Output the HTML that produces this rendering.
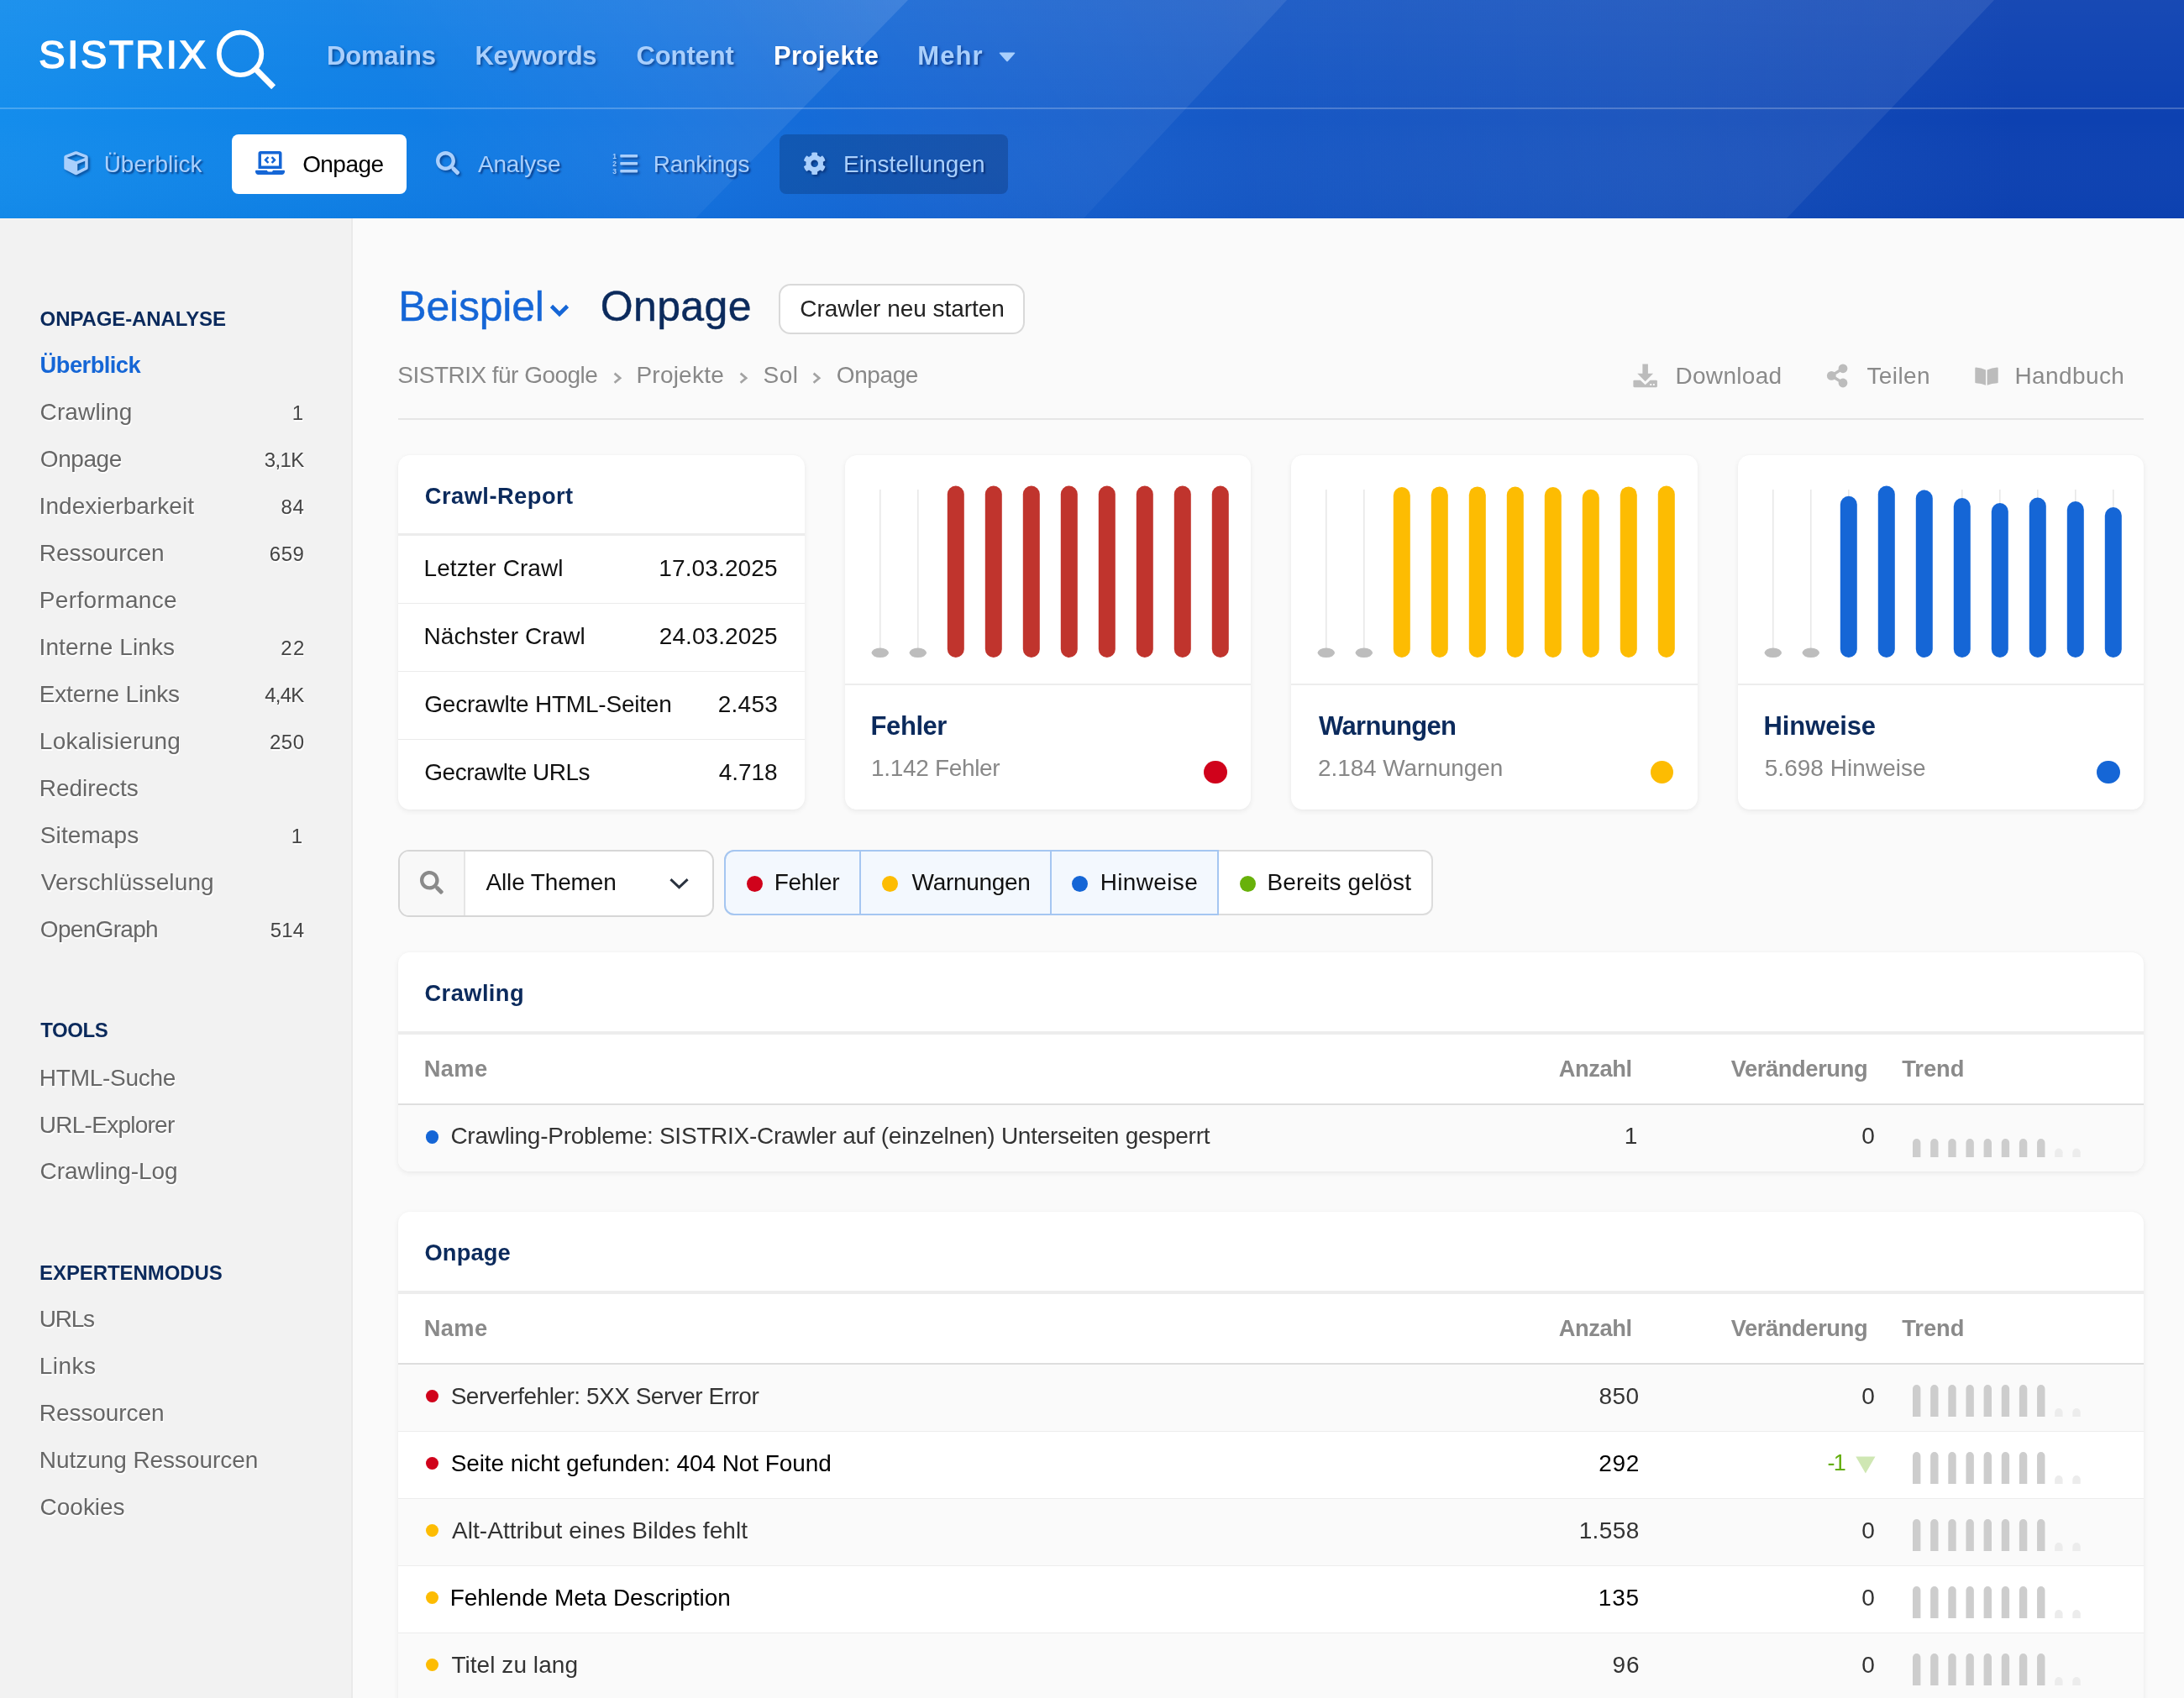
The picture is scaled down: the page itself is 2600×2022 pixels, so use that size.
<!DOCTYPE html>
<html lang="de"><head><meta charset="utf-8"><title>SISTRIX Onpage</title><style>
*{box-sizing:border-box;margin:0;padding:0}
html,body{width:2600px;height:2022px;overflow:hidden;background:#fafafa}
body{font-family:"Liberation Sans",sans-serif;position:relative;color:#333}
#root{position:absolute;left:0;top:0;width:2600px;height:2022px;overflow:hidden;will-change:transform;transform:translateZ(0)}
.t{position:absolute;white-space:nowrap}
.abs{position:absolute}
#hdr{position:absolute;left:0;top:0;width:2600px;height:260px;overflow:hidden;
 background:linear-gradient(90deg,#148dec 0%,#0f82e7 14%,#1274e0 29%,#1764d1 44%,#1657c4 58%,#144fbb 76%,#0d41b1 92%,#0d41b1 100%)}
#hdr .ov{position:absolute;left:0;top:0;width:2600px;height:260px}
#side{position:absolute;left:0;top:260px;width:420px;height:1762px;background:#f2f2f2;border-right:2px solid #e9e9e9}
.card{position:absolute;background:#fff;border-radius:14px;box-shadow:0 2px 6px rgba(0,0,0,.07),0 0 2px rgba(0,0,0,.04)}
.hl{position:absolute;height:2px;background:#ececec}
.sh{text-shadow:2px 2px 3px rgba(0,40,110,.55)}
</style></head><body><div id="root">
<div id="hdr">
<svg class="ov" viewBox="0 0 2600 260" preserveAspectRatio="none">
<defs>
<linearGradient id="gv" x1="0" y1="0" x2="0" y2="1"><stop offset="0" stop-color="#fff" stop-opacity=".045"/><stop offset=".55" stop-color="#fff" stop-opacity="0"/><stop offset="1" stop-color="#003a9a" stop-opacity=".05"/></linearGradient>
<linearGradient id="g1" gradientUnits="userSpaceOnUse" x1="640" y1="330" x2="1081" y2="0"><stop offset="0" stop-color="#fff" stop-opacity="0"/><stop offset="1" stop-color="#fff" stop-opacity=".12"/></linearGradient>
<linearGradient id="g2" gradientUnits="userSpaceOnUse" x1="1080" y1="330" x2="1532" y2="0"><stop offset="0" stop-color="#fff" stop-opacity="0"/><stop offset="1" stop-color="#fff" stop-opacity=".085"/></linearGradient>
<linearGradient id="g3" gradientUnits="userSpaceOnUse" x1="1450" y1="130" x2="2374" y2="0"><stop offset="0" stop-color="#fff" stop-opacity="0"/><stop offset="1" stop-color="#fff" stop-opacity=".085"/></linearGradient>
</defs>
<rect x="0" y="0" width="2600" height="260" fill="url(#gv)"/>
<polygon points="0,0 1081,0 828,260 0,260" fill="url(#g1)"/>
<polygon points="0,0 1532,0 1290,260 0,260" fill="url(#g2)"/>
<polygon points="0,0 2374,0 2127,260 0,260" fill="url(#g3)"/>
</svg>
<div class="abs" style="left:0;top:128px;width:2600px;height:2px;background:rgba(255,255,255,.22)"></div>
<div class="t" style="top:40.81px;font-size:47px;line-height:47px;color:#fff;letter-spacing:2.617px;left:46.35px;font-weight:400;-webkit-text-stroke:1.7px #fff;">SISTRIX</div>
<svg class="abs" style="left:250px;top:30px" width="90" height="84" viewBox="0 0 90 84"><circle cx="36.05" cy="33.9" r="25.3" fill="none" stroke="#fff" stroke-width="5.65"/><path d="M54.3 52.3 L75.6 73.8" stroke="#fff" stroke-width="7" stroke-linecap="butt" fill="none"/></svg>
<div class="t" style="top:51.26px;font-size:31px;line-height:31px;color:#a9cffc;font-weight:700;letter-spacing:-0.142px;left:388.90px;text-shadow:2px 2px 3px rgba(0,25,85,.5);">Domains</div>
<div class="t" style="top:51.26px;font-size:31px;line-height:31px;color:#a9cffc;font-weight:700;letter-spacing:-0.471px;left:565.60px;text-shadow:2px 2px 3px rgba(0,25,85,.5);">Keywords</div>
<div class="t" style="top:51.26px;font-size:31px;line-height:31px;color:#a9cffc;font-weight:700;letter-spacing:-0.100px;left:757.45px;text-shadow:2px 2px 3px rgba(0,25,85,.5);">Content</div>
<div class="t" style="top:51.26px;font-size:31px;line-height:31px;color:#fff;font-weight:700;letter-spacing:0.379px;left:921.00px;text-shadow:2px 2px 3px rgba(0,25,85,.5);">Projekte</div>
<div class="t" style="top:51.26px;font-size:31px;line-height:31px;color:#a9cffc;font-weight:700;letter-spacing:1.067px;left:1092.30px;text-shadow:2px 2px 3px rgba(0,25,85,.5);">Mehr</div>
<svg class="abs" style="left:1189px;top:62px" width="20" height="12" viewBox="0 0 20 12"><path d="M1.5 0.5h17q1.6 0 .5 1.3l-8 9q-1 1.1-2 0l-8-9q-1.1-1.3.5-1.3z" fill="#a9cffc"/></svg>
<div class="abs" style="left:276px;top:160px;width:208px;height:70.6px;background:#fff;border-radius:8px"></div>
<div class="abs" style="left:928px;top:160px;width:272px;height:70.6px;background:rgba(0,10,40,.21);border-radius:8px"></div>
<div class="t" style="top:181.70px;font-size:28px;line-height:28px;color:#a9cffc;letter-spacing:0.012px;left:123.65px;text-shadow:2px 2px 2px rgba(0,25,85,.62);">Überblick</div>
<div class="t" style="top:181.60px;font-size:28px;line-height:28px;color:#000;letter-spacing:-0.560px;left:360.15px;">Onpage</div>
<div class="t" style="top:181.70px;font-size:28px;line-height:28px;color:#a9cffc;letter-spacing:-0.192px;left:569.00px;text-shadow:2px 2px 2px rgba(0,25,85,.62);">Analyse</div>
<div class="t" style="top:181.70px;font-size:28px;line-height:28px;color:#a9cffc;letter-spacing:-0.314px;left:777.85px;text-shadow:2px 2px 2px rgba(0,25,85,.62);">Rankings</div>
<div class="t" style="top:181.70px;font-size:28px;line-height:28px;color:#a9cffc;letter-spacing:0.050px;left:1003.95px;text-shadow:2px 2px 2px rgba(0,25,85,.62);">Einstellungen</div>
<svg class="abs" style="left:75.8px;top:180.3px;filter:drop-shadow(2px 2px 1.5px rgba(0,25,85,.55));" width="29" height="28.5" viewBox="0 0 512 512"><path d="M239.1 6.3l-208 78c-18.7 7-31.1 25-31.1 45v225.1c0 18.2 10.3 34.800 26.500 42.900l208 104c13.500 6.800 29.400 6.800 42.900 0l208-104c16.300-8.100 26.500-24.800 26.500-42.900V129.300c0-20-12.400-37.900-31.100-44.900l-208-78C262 2.200 250 2.200 239.100 6.300zM256 68.400l192 72v1.100l-192 78-192-78v-1.100l192-72zm32 356V275.500l160-65v133.900l-160 80z" fill="#a9cffc"/></svg>
<svg class="abs" style="left:304.2px;top:180.3px;" width="35" height="28" viewBox="0 0 640 512"><path d="M255.03 261.65c6.250 6.250 16.380 6.250 22.630 0l11.310-11.310c6.250-6.250 6.250-16.380 0-22.630L253.250 192l35.710-35.720c6.250-6.250 6.250-16.380 0-22.630l-11.310-11.310c-6.250-6.250-16.380-6.250-22.630 0l-58.340 58.340c-6.250 6.250-6.250 16.380 0 22.630l58.350 58.340zm96.010-11.300l11.310 11.310c6.250 6.250 16.380 6.250 22.630 0l58.340-58.340c6.250-6.250 6.250-16.380 0-22.630l-58.340-58.340c-6.250-6.250-16.380-6.250-22.630 0l-11.310 11.310c-6.250 6.250-6.250 16.380 0 22.630L386.750 192l-35.710 35.720c-6.250 6.250-6.250 16.380 0 22.630zM624 416H381.540c-.74 19.810-14.710 32-32.740 32H288c-18.690 0-33.020-17.470-32.770-32H16c-8.800 0-16 7.200-16 16v16c0 35.200 28.800 64 64 64h512c35.200 0 64-28.800 64-64v-16c0-8.800-7.200-16-16-16zM576 48c0-26.400-21.600-48-48-48H112C85.600 0 64 21.600 64 48v336h512V48zm-64 272H128V64h384v256z" fill="#1566d6"/></svg>
<svg class="abs" style="left:519.2px;top:180.3px;filter:drop-shadow(2px 2px 1.5px rgba(0,25,85,.55));" width="28.3" height="28.3" viewBox="0 0 512 512"><path d="M505 442.7L405.3 343c-4.5-4.5-10.6-7-17-7H372c27.6-35.3 44-79.7 44-128C416 93.1 322.9 0 208 0S0 93.1 0 208s93.1 208 208 208c48.3 0 92.7-16.4 128-44v16.3c0 6.4 2.500 12.500 7 17l99.700 99.700c9.400 9.400 24.600 9.400 33.900 0l28.300-28.300c9.400-9.400 9.400-24.600.1-34zM208 336c-70.700 0-128-57.200-128-128 0-70.700 57.200-128 128-128 70.700 0 128 57.200 128 128 0 70.700-57.200 128-128 128z" fill="#a9cffc"/></svg>
<svg class="abs" style="left:729px;top:181px;filter:drop-shadow(2px 2px 1.5px rgba(0,25,85,.55));" width="32" height="28" viewBox="0 0 32 28"><rect x="9.3" y="3" width="20.8" height="3.6" rx=".8" fill="#a9cffc"/><rect x="9.3" y="12" width="20.8" height="3.6" rx=".8" fill="#a9cffc"/><rect x="9.3" y="21" width="20.800" height="3.600" rx=".8" fill="#a9cffc"/><g fill="#a9cffc" font-family="Liberation Sans,sans-serif" font-weight="700" font-size="8.5"><text x="0.3" y="7.6">1</text><text x="0.3" y="16.8">2</text><text x="0.3" y="26">3</text></g></svg>
<svg class="abs" style="left:956.4px;top:180.8px;filter:drop-shadow(2px 2px 1.5px rgba(0,25,85,.55));" width="27.4" height="27.4" viewBox="0 0 512 512"><path d="M487.4 315.7l-42.6-24.6c4.3-23.2 4.3-47 0-70.2l42.6-24.6c4.9-2.8 7.1-8.6 5.5-14-11.1-35.6-30-67.8-54.7-94.6-3.8-4.1-10-5.1-14.800-2.300L380.800 110c-17.900-15.400-38.500-27.300-60.800-35.100V25.800c0-5.600-3.900-10.500-9.400-11.700-36.700-8.200-74.300-7.800-109.200 0-5.500 1.200-9.400 6.100-9.400 11.700V75c-22.200 7.900-42.800 19.800-60.800 35.100L88.700 85.500c-4.900-2.800-11-1.900-14.800 2.300-24.700 26.700-43.600 58.900-54.700 94.600-1.700 5.400.6 11.200 5.500 14L67.300 221c-4.300 23.200-4.300 47 0 70.200l-42.600 24.600c-4.900 2.800-7.100 8.600-5.500 14 11.100 35.600 30 67.800 54.700 94.600 3.800 4.100 10 5.100 14.800 2.300l42.600-24.600c17.900 15.400 38.500 27.300 60.800 35.100v49.200c0 5.600 3.900 10.500 9.400 11.700 36.700 8.200 74.300 7.800 109.200 0 5.500-1.200 9.400-6.100 9.400-11.700v-49.200c22.200-7.900 42.800-19.800 60.800-35.100l42.600 24.600c4.900 2.800 11 1.900 14.800-2.300 24.700-26.700 43.600-58.900 54.700-94.600 1.500-5.500-.7-11.300-5.600-14.100zM256 336c-44.100 0-80-35.900-80-80s35.900-80 80-80 80 35.900 80 80-35.900 80-80 80z" fill="#a9cffc"/></svg>
</div>
<svg width="0" height="0" style="position:absolute"><defs><filter id="sb" x="-5%" y="-20%" width="110%" height="140%"><feGaussianBlur stdDeviation="0.55"/></filter></defs></svg>
<div id="side"></div>
<div class="t" style="top:367.68px;font-size:24px;line-height:24px;color:#0b2a5c;font-weight:700;letter-spacing:-0.104px;left:47.60px;">ONPAGE-ANALYSE</div>
<div class="t" style="top:421.39px;font-size:27.3px;line-height:27.3px;color:#1566d6;font-weight:700;letter-spacing:-0.537px;left:47.60px;">Überblick</div>
<div class="t" style="top:476.90px;font-size:28px;line-height:28px;color:#666;letter-spacing:0.114px;left:47.60px;text-shadow:1px 1.5px 0 rgba(255,255,255,.95);">Crawling</div>
<div class="t" style="top:480.28px;font-size:24px;line-height:24px;color:#444;right:2239.01px;text-shadow:1px 1.5px 0 rgba(255,255,255,.95);">1</div>
<div class="t" style="top:532.90px;font-size:28px;line-height:28px;color:#666;letter-spacing:-0.440px;left:47.85px;text-shadow:1px 1.5px 0 rgba(255,255,255,.95);">Onpage</div>
<div class="t" style="top:536.28px;font-size:24px;line-height:24px;color:#444;letter-spacing:-0.600px;right:2238.32px;text-shadow:1px 1.5px 0 rgba(255,255,255,.95);">3,1K</div>
<div class="t" style="top:588.90px;font-size:28px;line-height:28px;color:#666;letter-spacing:0.057px;left:46.60px;text-shadow:1px 1.5px 0 rgba(255,255,255,.95);">Indexierbarkeit</div>
<div class="t" style="top:592.28px;font-size:24px;line-height:24px;color:#444;letter-spacing:0.600px;right:2237.51px;text-shadow:1px 1.5px 0 rgba(255,255,255,.95);">84</div>
<div class="t" style="top:644.90px;font-size:28px;line-height:28px;color:#666;letter-spacing:-0.072px;left:46.85px;text-shadow:1px 1.5px 0 rgba(255,255,255,.95);">Ressourcen</div>
<div class="t" style="top:648.28px;font-size:24px;line-height:24px;color:#444;letter-spacing:0.525px;right:2237.54px;text-shadow:1px 1.5px 0 rgba(255,255,255,.95);">659</div>
<div class="t" style="top:700.90px;font-size:28px;line-height:28px;color:#666;letter-spacing:0.355px;left:46.85px;text-shadow:1px 1.5px 0 rgba(255,255,255,.95);">Performance</div>
<div class="t" style="top:756.90px;font-size:28px;line-height:28px;color:#666;letter-spacing:0.088px;left:46.60px;text-shadow:1px 1.5px 0 rgba(255,255,255,.95);">Interne Links</div>
<div class="t" style="top:760.28px;font-size:24px;line-height:24px;color:#444;letter-spacing:1.350px;right:2236.26px;text-shadow:1px 1.5px 0 rgba(255,255,255,.95);">22</div>
<div class="t" style="top:812.90px;font-size:28px;line-height:28px;color:#666;letter-spacing:-0.200px;left:46.85px;text-shadow:1px 1.5px 0 rgba(255,255,255,.95);">Externe Links</div>
<div class="t" style="top:816.28px;font-size:24px;line-height:24px;color:#444;letter-spacing:-0.767px;right:2238.49px;text-shadow:1px 1.5px 0 rgba(255,255,255,.95);">4,4K</div>
<div class="t" style="top:868.90px;font-size:28px;line-height:28px;color:#666;letter-spacing:0.258px;left:46.85px;text-shadow:1px 1.5px 0 rgba(255,255,255,.95);">Lokalisierung</div>
<div class="t" style="top:872.28px;font-size:24px;line-height:24px;color:#444;letter-spacing:0.450px;right:2237.57px;text-shadow:1px 1.5px 0 rgba(255,255,255,.95);">250</div>
<div class="t" style="top:924.90px;font-size:28px;line-height:28px;color:#666;letter-spacing:-0.050px;left:46.85px;text-shadow:1px 1.5px 0 rgba(255,255,255,.95);">Redirects</div>
<div class="t" style="top:980.90px;font-size:28px;line-height:28px;color:#666;letter-spacing:0.086px;left:47.85px;text-shadow:1px 1.5px 0 rgba(255,255,255,.95);">Sitemaps</div>
<div class="t" style="top:984.28px;font-size:24px;line-height:24px;color:#444;right:2239.81px;text-shadow:1px 1.5px 0 rgba(255,255,255,.95);">1</div>
<div class="t" style="top:1036.90px;font-size:28px;line-height:28px;color:#666;letter-spacing:0.139px;left:48.85px;text-shadow:1px 1.5px 0 rgba(255,255,255,.95);">Verschlüsselung</div>
<div class="t" style="top:1092.90px;font-size:28px;line-height:28px;color:#666;letter-spacing:-0.694px;left:47.85px;text-shadow:1px 1.5px 0 rgba(255,255,255,.95);">OpenGraph</div>
<div class="t" style="top:1096.28px;font-size:24px;line-height:24px;color:#444;letter-spacing:0.150px;right:2237.72px;text-shadow:1px 1.5px 0 rgba(255,255,255,.95);">514</div>
<div class="t" style="top:1215.48px;font-size:24px;line-height:24px;color:#0b2a5c;font-weight:700;letter-spacing:-0.475px;left:48.35px;">TOOLS</div>
<div class="t" style="top:1269.50px;font-size:28px;line-height:28px;color:#666;letter-spacing:-0.267px;left:46.85px;text-shadow:1px 1.5px 0 rgba(255,255,255,.95);">HTML-Suche</div>
<div class="t" style="top:1325.50px;font-size:28px;line-height:28px;color:#666;letter-spacing:-0.745px;left:46.85px;text-shadow:1px 1.5px 0 rgba(255,255,255,.95);">URL-Explorer</div>
<div class="t" style="top:1381.40px;font-size:28px;line-height:28px;color:#666;letter-spacing:-0.086px;left:47.60px;text-shadow:1px 1.5px 0 rgba(255,255,255,.95);">Crawling-Log</div>
<div class="t" style="top:1503.78px;font-size:24px;line-height:24px;color:#0b2a5c;font-weight:700;letter-spacing:-0.088px;left:47.10px;">EXPERTENMODUS</div>
<div class="t" style="top:1557.20px;font-size:28px;line-height:28px;color:#666;letter-spacing:-1.250px;left:46.85px;text-shadow:1px 1.5px 0 rgba(255,255,255,.95);">URLs</div>
<div class="t" style="top:1613.20px;font-size:28px;line-height:28px;color:#666;letter-spacing:0.450px;left:46.85px;text-shadow:1px 1.5px 0 rgba(255,255,255,.95);">Links</div>
<div class="t" style="top:1669.20px;font-size:28px;line-height:28px;color:#666;letter-spacing:-0.072px;left:46.85px;text-shadow:1px 1.5px 0 rgba(255,255,255,.95);">Ressourcen</div>
<div class="t" style="top:1725.20px;font-size:28px;line-height:28px;color:#666;letter-spacing:-0.065px;left:46.85px;text-shadow:1px 1.5px 0 rgba(255,255,255,.95);">Nutzung Ressourcen</div>
<div class="t" style="top:1781.10px;font-size:28px;line-height:28px;color:#666;letter-spacing:-0.025px;left:47.60px;text-shadow:1px 1.5px 0 rgba(255,255,255,.95);">Cookies</div>
<div class="t" style="top:339.68px;font-size:50px;line-height:50px;color:#1566d6;letter-spacing:-0.207px;left:474.30px;-webkit-text-stroke:.45px #1566d6;">Beispiel</div>
<svg class="abs" style="left:652px;top:360px" width="28" height="20" viewBox="0 0 28 20"><path d="M4.5 4.5 L14 14 L23.5 4.5" fill="none" stroke="#1566d6" stroke-width="4.6" stroke-linecap="butt" stroke-linejoin="miter"/></svg>
<div class="t" style="top:339.68px;font-size:50px;line-height:50px;color:#0b2a5c;letter-spacing:0.400px;left:714.65px;-webkit-text-stroke:.45px #0b2a5c;">Onpage</div>
<div class="abs" style="left:927.2px;top:338px;width:293.3px;height:59.7px;background:#fff;border:2px solid #d9d9d9;border-radius:14px"></div>
<div class="t" style="top:353.70px;font-size:28px;line-height:28px;color:#222;letter-spacing:-0.033px;left:952.20px;">Crawler neu starten</div>
<div class="t" style="top:433.00px;font-size:28px;line-height:28px;color:#888;letter-spacing:-0.529px;left:473.35px;">SISTRIX für Google</div>
<div class="t" style="top:433.00px;font-size:28px;line-height:28px;color:#888;letter-spacing:0.221px;left:757.45px;">Projekte</div>
<div class="t" style="top:433.00px;font-size:28px;line-height:28px;color:#888;letter-spacing:0.525px;left:908.45px;">Sol</div>
<div class="t" style="top:433.00px;font-size:28px;line-height:28px;color:#888;letter-spacing:-0.400px;left:995.75px;">Onpage</div>
<svg class="abs" style="left:728.9px;top:440px" width="14" height="20" viewBox="0 0 14 20"><path d="M2.6 4.6 L9.2 10.2 L2.6 15.8" fill="none" stroke="#a3a3a3" stroke-width="2.7"/></svg>
<svg class="abs" style="left:879.4px;top:440px" width="14" height="20" viewBox="0 0 14 20"><path d="M2.6 4.6 L9.2 10.2 L2.6 15.8" fill="none" stroke="#a3a3a3" stroke-width="2.7"/></svg>
<svg class="abs" style="left:966.4px;top:440px" width="14" height="20" viewBox="0 0 14 20"><path d="M2.6 4.6 L9.2 10.2 L2.6 15.8" fill="none" stroke="#a3a3a3" stroke-width="2.7"/></svg>
<div class="t" style="top:434.00px;font-size:28px;line-height:28px;color:#8a8a8a;letter-spacing:0.314px;left:1994.45px;">Download</div>
<div class="t" style="top:434.00px;font-size:28px;line-height:28px;color:#8a8a8a;letter-spacing:0.370px;left:2222.50px;">Teilen</div>
<div class="t" style="top:434.00px;font-size:28px;line-height:28px;color:#8a8a8a;letter-spacing:0.400px;left:2398.45px;">Handbuch</div>
<svg class="abs" style="left:1944px;top:433px" width="30" height="29" viewBox="0 0 30 29"><path d="M11.4 .5h6.500v11.200h6.200L14.650 21.300 5.200 11.700h6.200z" fill="#bcbcbc"/><path d="M1.500 19.700h7.300l5.850 5.600 5.850-5.600h7.300q1.100 0 1.100 1.100v6.300q0 1.100-1.100 1.100H1.500q-1.100 0-1.100-1.100v-6.300q0-1.100 1.100-1.100zM20.300 24.100v1.900h1.900v-1.900zM23.900 24.100v1.900h1.900v-1.900z" fill="#bcbcbc" fill-rule="evenodd"/></svg>
<svg class="abs" style="left:2174px;top:433px" width="27" height="29" viewBox="0 0 27 29"><path d="M20 5.800 L6.300 14.400 L20 23" fill="none" stroke="#bcbcbc" stroke-width="3.4"/><circle cx="20" cy="5.800" r="5.400" fill="#bcbcbc"/><circle cx="6.300" cy="14.400" r="5.400" fill="#bcbcbc"/><circle cx="20" cy="23" r="5.400" fill="#bcbcbc"/></svg>
<svg class="abs" style="left:2351px;top:437px" width="28" height="22" viewBox="0 0 28 22"><path d="M.3 1.500Q.3 .5 1.300 .6 8 1 13 3.400V21.700Q8 19.400 1.300 19.200 .3 19.200 .3 18.200zM27.700 1.500Q27.700 .5 26.700 .6 20 1 14.600 3.400V21.700Q20 19.400 26.700 19.200 27.700 19.200 27.700 18.200z" fill="#bcbcbc"/></svg>
<div class="abs" style="left:474px;top:498px;width:2078px;height:2px;background:#e6e6e6"></div>
<div class="card" style="left:474px;top:542px;width:483.5px;height:422px"></div>
<div class="card" style="left:1005.5px;top:542px;width:483.5px;height:422px"></div>
<div class="card" style="left:1537px;top:542px;width:483.5px;height:422px"></div>
<div class="card" style="left:2068.5px;top:542px;width:483.5px;height:422px"></div>
<div class="t" style="top:576.89px;font-size:27.3px;line-height:27.3px;color:#0b2a5c;font-weight:700;letter-spacing:0.455px;left:505.80px;">Crawl-Report</div>
<div class="hl" style="left:474px;top:635.4px;width:483.5px;height:2.6px;background:#ececec"></div>
<div class="t" style="top:663.30px;font-size:28px;line-height:28px;color:#111;letter-spacing:0.088px;left:504.55px;">Letzter Crawl</div>
<div class="t" style="top:663.30px;font-size:28px;line-height:28px;color:#111;letter-spacing:0.133px;right:1674.28px;">17.03.2025</div>
<div class="t" style="top:744.00px;font-size:28px;line-height:28px;color:#111;letter-spacing:0.065px;left:504.55px;">Nächster Crawl</div>
<div class="t" style="top:744.00px;font-size:28px;line-height:28px;color:#111;letter-spacing:0.078px;right:1674.33px;">24.03.2025</div>
<div class="t" style="top:825.30px;font-size:28px;line-height:28px;color:#111;letter-spacing:-0.215px;left:505.30px;">Gecrawlte HTML-Seiten</div>
<div class="t" style="top:825.30px;font-size:28px;line-height:28px;color:#111;letter-spacing:0.212px;right:1674.04px;">2.453</div>
<div class="t" style="top:906.20px;font-size:28px;line-height:28px;color:#111;letter-spacing:-0.504px;left:505.30px;">Gecrawlte URLs</div>
<div class="t" style="top:906.20px;font-size:28px;line-height:28px;color:#111;letter-spacing:-0.100px;right:1674.61px;">4.718</div>
<div class="hl" style="left:474px;top:717.6px;width:483.5px;height:1.4px;background:#ebebeb"></div>
<div class="hl" style="left:474px;top:799px;width:483.5px;height:1.4px;background:#ebebeb"></div>
<div class="hl" style="left:474px;top:879.8px;width:483.5px;height:1.4px;background:#ebebeb"></div>
<svg class="abs" style="left:1005.5px;top:542px" width="484" height="274" viewBox="0 0 484 274"><rect x="41.2" y="41" width="1.3" height="194" fill="#e3e3e3"/><ellipse cx="41.8" cy="235.3" rx="10.2" ry="5.8" fill="#bdbdbd"/><rect x="86.2" y="41" width="1.3" height="194" fill="#e3e3e3"/><ellipse cx="86.8" cy="235.3" rx="10.2" ry="5.8" fill="#bdbdbd"/><rect x="121.8" y="36.5" width="20" height="204.5" rx="10" ry="10" fill="#c0342d"/><rect x="166.8" y="36.5" width="20" height="204.5" rx="10" ry="10" fill="#c0342d"/><rect x="211.8" y="36.5" width="20" height="204.5" rx="10" ry="10" fill="#c0342d"/><rect x="256.8" y="36.5" width="20" height="204.5" rx="10" ry="10" fill="#c0342d"/><rect x="301.8" y="36.5" width="20" height="204.5" rx="10" ry="10" fill="#c0342d"/><rect x="346.8" y="36.5" width="20" height="204.5" rx="10" ry="10" fill="#c0342d"/><rect x="391.8" y="36.5" width="20" height="204.5" rx="10" ry="10" fill="#c0342d"/><rect x="436.8" y="36.5" width="20" height="204.5" rx="10" ry="10" fill="#c0342d"/></svg>
<div class="hl" style="left:1005.5px;top:814px;width:483.5px;height:2px;background:#ededed"></div>
<div class="t" style="top:848.76px;font-size:31px;line-height:31px;color:#0b2a5c;font-weight:700;letter-spacing:-0.440px;left:1036.60px;">Fehler</div>
<div class="t" style="top:901.10px;font-size:28px;line-height:28px;color:#888;letter-spacing:-0.327px;left:1037.00px;">1.142 Fehler</div>
<div class="abs" style="left:1433.3px;top:905.7px;width:27.5px;height:27.5px;border-radius:50%;background:#d0021b"></div>
<svg class="abs" style="left:1537px;top:542px" width="484" height="274" viewBox="0 0 484 274"><rect x="41.2" y="41" width="1.3" height="194" fill="#e3e3e3"/><ellipse cx="41.8" cy="235.3" rx="10.2" ry="5.8" fill="#bdbdbd"/><rect x="86.2" y="41" width="1.3" height="194" fill="#e3e3e3"/><ellipse cx="86.8" cy="235.3" rx="10.2" ry="5.8" fill="#bdbdbd"/><rect x="121.8" y="38.0" width="20" height="203.0" rx="10" ry="10" fill="#fdbc02"/><rect x="166.8" y="37.4" width="20" height="203.6" rx="10" ry="10" fill="#fdbc02"/><rect x="211.8" y="37.4" width="20" height="203.6" rx="10" ry="10" fill="#fdbc02"/><rect x="256.8" y="37.6" width="20" height="203.4" rx="10" ry="10" fill="#fdbc02"/><rect x="301.8" y="38.0" width="20" height="203.0" rx="10" ry="10" fill="#fdbc02"/><rect x="346.8" y="40.8" width="20" height="200.2" rx="10" ry="10" fill="#fdbc02"/><rect x="391.8" y="37.4" width="20" height="203.6" rx="10" ry="10" fill="#fdbc02"/><rect x="436.8" y="36.5" width="20" height="204.5" rx="10" ry="10" fill="#fdbc02"/></svg>
<div class="hl" style="left:1537px;top:814px;width:483.5px;height:2px;background:#ededed"></div>
<div class="t" style="top:848.76px;font-size:31px;line-height:31px;color:#0b2a5c;font-weight:700;letter-spacing:-0.688px;left:1570.10px;">Warnungen</div>
<div class="t" style="top:901.10px;font-size:28px;line-height:28px;color:#888;letter-spacing:-0.096px;left:1569.00px;">2.184 Warnungen</div>
<div class="abs" style="left:1964.8px;top:905.7px;width:27.5px;height:27.5px;border-radius:50%;background:#fdbc02"></div>
<svg class="abs" style="left:2068.5px;top:542px" width="484" height="274" viewBox="0 0 484 274"><rect x="41.2" y="41" width="1.3" height="194" fill="#e3e3e3"/><ellipse cx="41.8" cy="235.3" rx="10.2" ry="5.8" fill="#bdbdbd"/><rect x="86.2" y="41" width="1.3" height="194" fill="#e3e3e3"/><ellipse cx="86.8" cy="235.3" rx="10.2" ry="5.8" fill="#bdbdbd"/><rect x="131.2" y="41" width="1.3" height="15.7" fill="#e3e3e3"/><rect x="121.8" y="48.7" width="20" height="192.3" rx="10" ry="10" fill="#1566d6"/><rect x="176.2" y="41" width="1.3" height="3.5" fill="#e3e3e3"/><rect x="166.8" y="36.5" width="20" height="204.5" rx="10" ry="10" fill="#1566d6"/><rect x="221.2" y="41" width="1.3" height="8.6" fill="#e3e3e3"/><rect x="211.8" y="41.6" width="20" height="199.4" rx="10" ry="10" fill="#1566d6"/><rect x="266.2" y="41" width="1.3" height="18.0" fill="#e3e3e3"/><rect x="256.8" y="51.0" width="20" height="190.0" rx="10" ry="10" fill="#1566d6"/><rect x="311.2" y="41" width="1.3" height="24.0" fill="#e3e3e3"/><rect x="301.8" y="57.0" width="20" height="184.0" rx="10" ry="10" fill="#1566d6"/><rect x="356.2" y="41" width="1.3" height="17.6" fill="#e3e3e3"/><rect x="346.8" y="50.6" width="20" height="190.4" rx="10" ry="10" fill="#1566d6"/><rect x="401.2" y="41" width="1.3" height="22.0" fill="#e3e3e3"/><rect x="391.8" y="55.0" width="20" height="186.0" rx="10" ry="10" fill="#1566d6"/><rect x="446.2" y="41" width="1.3" height="29.0" fill="#e3e3e3"/><rect x="436.8" y="62.0" width="20" height="179.0" rx="10" ry="10" fill="#1566d6"/></svg>
<div class="hl" style="left:2068.5px;top:814px;width:483.5px;height:2px;background:#ededed"></div>
<div class="t" style="top:848.76px;font-size:31px;line-height:31px;color:#0b2a5c;font-weight:700;letter-spacing:-0.129px;left:2099.60px;">Hinweise</div>
<div class="t" style="top:901.10px;font-size:28px;line-height:28px;color:#888;letter-spacing:0.031px;left:2100.75px;">5.698 Hinweise</div>
<div class="abs" style="left:2496.3px;top:905.7px;width:27.5px;height:27.5px;border-radius:50%;background:#1566d6"></div>
<div class="abs" style="left:474px;top:1012px;width:376px;height:79.6px;background:#fff;border:2px solid #d6d6d6;border-radius:13px;overflow:hidden"><div style="position:absolute;left:0;top:0;width:78px;height:100%;background:#f8f8f8;border-right:2px solid #e6e6e6"></div></div>
<svg class="abs" style="left:500.2px;top:1037.2px;" width="27.8" height="27.8" viewBox="0 0 512 512"><path d="M505 442.7L405.3 343c-4.5-4.5-10.6-7-17-7H372c27.6-35.3 44-79.7 44-128C416 93.1 322.9 0 208 0S0 93.1 0 208s93.1 208 208 208c48.3 0 92.7-16.4 128-44v16.3c0 6.4 2.500 12.500 7 17l99.700 99.700c9.400 9.400 24.600 9.400 33.900 0l28.300-28.300c9.400-9.400 9.400-24.600.1-34zM208 336c-70.700 0-128-57.200-128-128 0-70.700 57.200-128 128-128 70.700 0 128 57.200 128 128 0 70.700-57.200 128-128 128z" fill="#8a8a8a"/></svg>
<div class="t" style="top:1037.30px;font-size:28px;line-height:28px;color:#111;letter-spacing:-0.140px;left:578.50px;">Alle Themen</div>
<svg class="abs" style="left:795px;top:1043px" width="28" height="20" viewBox="0 0 28 20"><path d="M3.4 4.2 L13.5 13.6 L23.6 4.2" fill="none" stroke="#2b3340" stroke-width="3"/></svg>
<div class="abs" style="left:862.3px;top:1012px;width:843.4px;height:78px;background:#fff;border:2px solid #dcdcdc;border-radius:12px"></div>
<div class="abs" style="left:862.3px;top:1012px;width:589px;height:78px;background:#f3f8fe;border:2px solid #a5c6f1;border-radius:12px 0 0 12px"></div>
<div class="abs" style="left:1023px;top:1013px;width:2px;height:76px;background:#a5c6f1"></div>
<div class="abs" style="left:1250px;top:1013px;width:2px;height:76px;background:#a5c6f1"></div>
<div class="abs" style="left:888.6px;top:1043px;width:19px;height:19px;border-radius:50%;background:#d0021b"></div>
<div class="t" style="top:1036.60px;font-size:28px;line-height:28px;color:#111;letter-spacing:-0.310px;left:921.75px;">Fehler</div>
<div class="abs" style="left:1050.0px;top:1043px;width:19px;height:19px;border-radius:50%;background:#fdbc02"></div>
<div class="t" style="top:1036.60px;font-size:28px;line-height:28px;color:#111;letter-spacing:-0.294px;left:1085.55px;">Warnungen</div>
<div class="abs" style="left:1276.4px;top:1043px;width:19px;height:19px;border-radius:50%;background:#1566d6"></div>
<div class="t" style="top:1036.60px;font-size:28px;line-height:28px;color:#111;letter-spacing:0.357px;left:1309.65px;">Hinweise</div>
<div class="abs" style="left:1475.5px;top:1043px;width:19px;height:19px;border-radius:50%;background:#68b10a"></div>
<div class="t" style="top:1036.60px;font-size:28px;line-height:28px;color:#111;letter-spacing:0.142px;left:1508.45px;">Bereits gelöst</div>
<div class="card" style="left:474px;top:1133.8px;width:2078px;height:261px;overflow:hidden"><div style="position:absolute;left:0;top:94.2px;width:100%;height:4px;background:#ededed"></div><div style="position:absolute;left:0;top:179.8px;width:100%;height:2px;background:#dedede"></div></div>
<div class="t" style="top:1169.19px;font-size:27.3px;line-height:27.3px;color:#0b2a5c;font-weight:700;letter-spacing:0.407px;left:505.50px;">Crawling</div>
<div class="t" style="top:1259.19px;font-size:27.3px;line-height:27.3px;color:#8a8a8a;font-weight:700;letter-spacing:0.350px;left:504.75px;">Name</div>
<div class="t" style="top:1259.19px;font-size:27.3px;line-height:27.3px;color:#8a8a8a;font-weight:700;letter-spacing:-0.420px;right:657.39px;">Anzahl</div>
<div class="t" style="top:1259.19px;font-size:27.3px;line-height:27.3px;color:#8a8a8a;font-weight:700;letter-spacing:-0.405px;right:376.83px;">Veränderung</div>
<div class="t" style="top:1259.19px;font-size:27.3px;line-height:27.3px;color:#8a8a8a;font-weight:700;letter-spacing:-0.062px;left:2264.25px;">Trend</div>
<div class="abs" style="left:474px;top:1315.6px;width:2078px;height:79.2px;background:#fafafa;border-radius:0 0 14px 14px;"></div>
<div class="abs" style="left:506.5px;top:1346.4px;width:15.2px;height:15.2px;border-radius:50%;background:#1566d6"></div>
<div class="t" style="top:1339.10px;font-size:28px;line-height:28px;color:#333;letter-spacing:-0.267px;left:536.40px;">Crawling-Probleme: SISTRIX-Crawler auf (einzelnen) Unterseiten gesperrt</div>
<div class="t" style="top:1339.10px;font-size:28px;line-height:28px;color:#333;right:650.67px;">1</div>
<div class="t" style="top:1339.10px;font-size:28px;line-height:28px;color:#333;right:368.12px;">0</div>
<svg class="abs" style="left:2274.8px;top:1354.1999999999998px" width="208" height="23.5" viewBox="-2 -2 208 23.5"><g filter="url(#sb)"><rect x="0.00" y="0" width="9.4" height="29.5" rx="4.7" fill="#cdcdcd"/><rect x="21.15" y="0" width="9.4" height="29.5" rx="4.7" fill="#cdcdcd"/><rect x="42.30" y="0" width="9.4" height="29.5" rx="4.7" fill="#cdcdcd"/><rect x="63.45" y="0" width="9.4" height="29.5" rx="4.7" fill="#cdcdcd"/><rect x="84.60" y="0" width="9.4" height="29.5" rx="4.7" fill="#cdcdcd"/><rect x="105.75" y="0" width="9.4" height="29.5" rx="4.7" fill="#cdcdcd"/><rect x="126.90" y="0" width="9.4" height="29.5" rx="4.7" fill="#cdcdcd"/><rect x="148.05" y="0" width="9.4" height="29.5" rx="4.7" fill="#cdcdcd"/><rect x="169.20" y="11.5" width="9.4" height="20" rx="4.7" fill="#ececec"/><rect x="190.35" y="11.5" width="9.4" height="20" rx="4.7" fill="#ececec"/></g></svg>
<div class="card" style="left:474px;top:1443px;width:2078px;height:700px;overflow:hidden"><div style="position:absolute;left:0;top:94.2px;width:100%;height:4px;background:#ededed"></div><div style="position:absolute;left:0;top:179.8px;width:100%;height:2px;background:#dedede"></div></div>
<div class="t" style="top:1478.39px;font-size:27.3px;line-height:27.3px;color:#0b2a5c;font-weight:700;letter-spacing:0.110px;left:505.50px;">Onpage</div>
<div class="t" style="top:1568.39px;font-size:27.3px;line-height:27.3px;color:#8a8a8a;font-weight:700;letter-spacing:0.350px;left:504.75px;">Name</div>
<div class="t" style="top:1568.39px;font-size:27.3px;line-height:27.3px;color:#8a8a8a;font-weight:700;letter-spacing:-0.420px;right:657.39px;">Anzahl</div>
<div class="t" style="top:1568.39px;font-size:27.3px;line-height:27.3px;color:#8a8a8a;font-weight:700;letter-spacing:-0.405px;right:376.83px;">Veränderung</div>
<div class="t" style="top:1568.39px;font-size:27.3px;line-height:27.3px;color:#8a8a8a;font-weight:700;letter-spacing:-0.062px;left:2264.25px;">Trend</div>
<div class="abs" style="left:474px;top:1625px;width:2078px;height:80px;background:#fafafa;border-bottom:1px solid #ececec;"></div>
<div class="abs" style="left:506.5px;top:1654.6000000000001px;width:15.2px;height:15.2px;border-radius:50%;background:#d0021b"></div>
<div class="t" style="top:1648.50px;font-size:28px;line-height:28px;color:#333;letter-spacing:-0.488px;left:536.65px;">Serverfehler: 5XX Server Error</div>
<div class="t" style="top:1648.50px;font-size:28px;line-height:28px;color:#333;letter-spacing:0.500px;right:648.32px;">850</div>
<div class="t" style="top:1648.50px;font-size:28px;line-height:28px;color:#333;right:368.12px;">0</div>
<svg class="abs" style="left:2274.8px;top:1646.7px" width="208" height="40" viewBox="-2 -2 208 40"><g filter="url(#sb)"><rect x="0.00" y="0" width="9.4" height="46" rx="4.7" fill="#cdcdcd"/><rect x="21.15" y="0" width="9.4" height="46" rx="4.7" fill="#cdcdcd"/><rect x="42.30" y="0" width="9.4" height="46" rx="4.7" fill="#cdcdcd"/><rect x="63.45" y="0" width="9.4" height="46" rx="4.7" fill="#cdcdcd"/><rect x="84.60" y="0" width="9.4" height="46" rx="4.7" fill="#cdcdcd"/><rect x="105.75" y="0" width="9.4" height="46" rx="4.7" fill="#cdcdcd"/><rect x="126.90" y="0" width="9.4" height="46" rx="4.7" fill="#cdcdcd"/><rect x="148.05" y="0" width="9.4" height="46" rx="4.7" fill="#cdcdcd"/><rect x="169.20" y="28" width="9.4" height="20" rx="4.7" fill="#ececec"/><rect x="190.35" y="28" width="9.4" height="20" rx="4.7" fill="#ececec"/></g></svg>
<div class="abs" style="left:474px;top:1705px;width:2078px;height:80px;background:#fff;border-bottom:1px solid #ececec;"></div>
<div class="abs" style="left:506.5px;top:1734.6000000000001px;width:15.2px;height:15.2px;border-radius:50%;background:#d0021b"></div>
<div class="t" style="top:1728.50px;font-size:28px;line-height:28px;color:#000;letter-spacing:-0.088px;left:536.65px;">Seite nicht gefunden: 404 Not Found</div>
<div class="t" style="top:1728.50px;font-size:28px;line-height:28px;color:#000;letter-spacing:0.750px;right:647.82px;">292</div>
<div class="t" style="top:1729.34px;font-size:27px;line-height:27px;color:#62ad0a;letter-spacing:-1.700px;right:403.95px;">-1</div>
<svg class="abs" style="left:2208.5px;top:1734.2px" width="24" height="22" viewBox="0 0 24 22"><path d="M.3 .6h23.2L11.900 20.600z" fill="#cfe7b3"/></svg>
<svg class="abs" style="left:2274.8px;top:1726.7px" width="208" height="40" viewBox="-2 -2 208 40"><g filter="url(#sb)"><rect x="0.00" y="0" width="9.4" height="46" rx="4.7" fill="#cdcdcd"/><rect x="21.15" y="0" width="9.4" height="46" rx="4.7" fill="#cdcdcd"/><rect x="42.30" y="0" width="9.4" height="46" rx="4.7" fill="#cdcdcd"/><rect x="63.45" y="0" width="9.4" height="46" rx="4.7" fill="#cdcdcd"/><rect x="84.60" y="0" width="9.4" height="46" rx="4.7" fill="#cdcdcd"/><rect x="105.75" y="0" width="9.4" height="46" rx="4.7" fill="#cdcdcd"/><rect x="126.90" y="0" width="9.4" height="46" rx="4.7" fill="#cdcdcd"/><rect x="148.05" y="0" width="9.4" height="46" rx="4.7" fill="#cdcdcd"/><rect x="169.20" y="28" width="9.4" height="20" rx="4.7" fill="#ececec"/><rect x="190.35" y="28" width="9.4" height="20" rx="4.7" fill="#ececec"/></g></svg>
<div class="abs" style="left:474px;top:1785px;width:2078px;height:80px;background:#fafafa;border-bottom:1px solid #ececec;"></div>
<div class="abs" style="left:506.5px;top:1814.6000000000001px;width:15.2px;height:15.2px;border-radius:50%;background:#fdbc02"></div>
<div class="t" style="top:1808.50px;font-size:28px;line-height:28px;color:#333;letter-spacing:0.067px;left:537.90px;">Alt-Attribut eines Bildes fehlt</div>
<div class="t" style="top:1808.50px;font-size:28px;line-height:28px;color:#333;letter-spacing:0.400px;right:648.31px;">1.558</div>
<div class="t" style="top:1808.50px;font-size:28px;line-height:28px;color:#333;right:368.12px;">0</div>
<svg class="abs" style="left:2274.8px;top:1806.7px" width="208" height="40" viewBox="-2 -2 208 40"><g filter="url(#sb)"><rect x="0.00" y="0" width="9.4" height="46" rx="4.7" fill="#cdcdcd"/><rect x="21.15" y="0" width="9.4" height="46" rx="4.7" fill="#cdcdcd"/><rect x="42.30" y="0" width="9.4" height="46" rx="4.7" fill="#cdcdcd"/><rect x="63.45" y="0" width="9.4" height="46" rx="4.7" fill="#cdcdcd"/><rect x="84.60" y="0" width="9.4" height="46" rx="4.7" fill="#cdcdcd"/><rect x="105.75" y="0" width="9.4" height="46" rx="4.7" fill="#cdcdcd"/><rect x="126.90" y="0" width="9.4" height="46" rx="4.7" fill="#cdcdcd"/><rect x="148.05" y="0" width="9.4" height="46" rx="4.7" fill="#cdcdcd"/><rect x="169.20" y="28" width="9.4" height="20" rx="4.7" fill="#ececec"/><rect x="190.35" y="28" width="9.4" height="20" rx="4.7" fill="#ececec"/></g></svg>
<div class="abs" style="left:474px;top:1865px;width:2078px;height:80px;background:#fff;border-bottom:1px solid #ececec;"></div>
<div class="abs" style="left:506.5px;top:1894.6000000000001px;width:15.2px;height:15.2px;border-radius:50%;background:#fdbc02"></div>
<div class="t" style="top:1888.50px;font-size:28px;line-height:28px;color:#000;letter-spacing:-0.021px;left:535.65px;">Fehlende Meta Description</div>
<div class="t" style="top:1888.50px;font-size:28px;line-height:28px;color:#000;letter-spacing:0.875px;right:647.94px;">135</div>
<div class="t" style="top:1888.50px;font-size:28px;line-height:28px;color:#333;right:368.12px;">0</div>
<svg class="abs" style="left:2274.8px;top:1886.7px" width="208" height="40" viewBox="-2 -2 208 40"><g filter="url(#sb)"><rect x="0.00" y="0" width="9.4" height="46" rx="4.7" fill="#cdcdcd"/><rect x="21.15" y="0" width="9.4" height="46" rx="4.7" fill="#cdcdcd"/><rect x="42.30" y="0" width="9.4" height="46" rx="4.7" fill="#cdcdcd"/><rect x="63.45" y="0" width="9.4" height="46" rx="4.7" fill="#cdcdcd"/><rect x="84.60" y="0" width="9.4" height="46" rx="4.7" fill="#cdcdcd"/><rect x="105.75" y="0" width="9.4" height="46" rx="4.7" fill="#cdcdcd"/><rect x="126.90" y="0" width="9.4" height="46" rx="4.7" fill="#cdcdcd"/><rect x="148.05" y="0" width="9.4" height="46" rx="4.7" fill="#cdcdcd"/><rect x="169.20" y="28" width="9.4" height="20" rx="4.7" fill="#ececec"/><rect x="190.35" y="28" width="9.4" height="20" rx="4.7" fill="#ececec"/></g></svg>
<div class="abs" style="left:474px;top:1945px;width:2078px;height:80px;background:#fafafa;border-bottom:1px solid #ececec;"></div>
<div class="abs" style="left:506.5px;top:1974.6000000000001px;width:15.2px;height:15.2px;border-radius:50%;background:#fdbc02"></div>
<div class="t" style="top:1968.50px;font-size:28px;line-height:28px;color:#333;letter-spacing:0.054px;left:537.40px;">Titel zu lang</div>
<div class="t" style="top:1968.50px;font-size:28px;line-height:28px;color:#333;letter-spacing:1.000px;right:647.39px;">96</div>
<div class="t" style="top:1968.50px;font-size:28px;line-height:28px;color:#333;right:368.12px;">0</div>
<svg class="abs" style="left:2274.8px;top:1966.7px" width="208" height="40" viewBox="-2 -2 208 40"><g filter="url(#sb)"><rect x="0.00" y="0" width="9.4" height="46" rx="4.7" fill="#cdcdcd"/><rect x="21.15" y="0" width="9.4" height="46" rx="4.7" fill="#cdcdcd"/><rect x="42.30" y="0" width="9.4" height="46" rx="4.7" fill="#cdcdcd"/><rect x="63.45" y="0" width="9.4" height="46" rx="4.7" fill="#cdcdcd"/><rect x="84.60" y="0" width="9.4" height="46" rx="4.7" fill="#cdcdcd"/><rect x="105.75" y="0" width="9.4" height="46" rx="4.7" fill="#cdcdcd"/><rect x="126.90" y="0" width="9.4" height="46" rx="4.7" fill="#cdcdcd"/><rect x="148.05" y="0" width="9.4" height="46" rx="4.7" fill="#cdcdcd"/><rect x="169.20" y="28" width="9.4" height="20" rx="4.7" fill="#ececec"/><rect x="190.35" y="28" width="9.4" height="20" rx="4.7" fill="#ececec"/></g></svg>
</div></body></html>
